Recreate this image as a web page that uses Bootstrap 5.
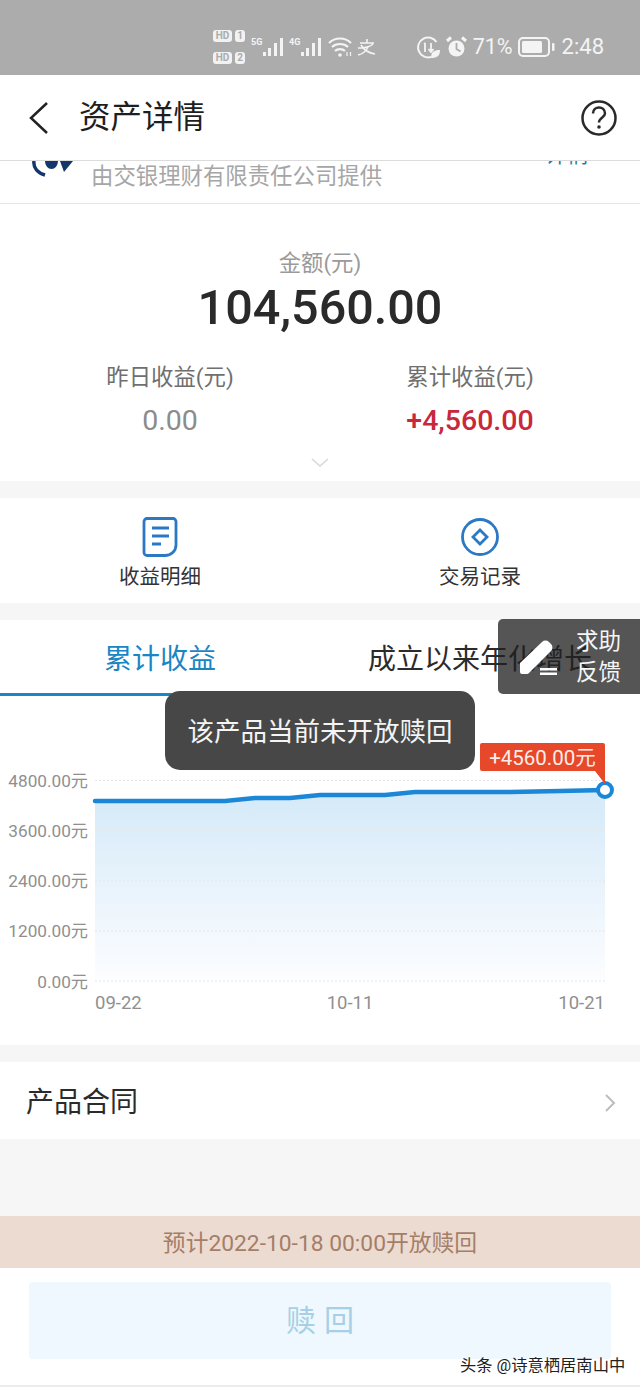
<!DOCTYPE html>
<html lang="zh-CN">
<head>
  <meta charset="UTF-8" />
  <meta name="viewport" content="width=device-width, initial-scale=1.0"/>
  <title>资产详情</title>
  <link href="https://cdn.jsdelivr.net/npm/bootstrap@5.3.3/dist/css/bootstrap.min.css" rel="stylesheet">
  <style>
    body {
      font-family: Roboto, "Noto Sans CJK SC", sans-serif;
      background: #f6f6f6;
      width: 640px;
      height: 1387px;
      overflow: hidden;
      position: relative;
    }
    .status-strip { height: 75px; background: #acacac; color: #f4f4f4; padding: 19px 36px 0 213px; }
    .hd-col { width: 32px; gap: 10px; }
    .hd-tag { font-size: 10px; line-height: 12px; height: 12px; font-weight: 700; background: #f2f2f2; color: #acacac; border-radius: 3px; text-align: center; width: 19px; }
    .hd-num { font-size: 10px; line-height: 12px; height: 12px; font-weight: 700; width: 10px; text-align: center; margin-left: 3px; background: #f2f2f2; color: #acacac; border-radius: 3px; }
    .net-label { font-size: 9px; line-height: 9px; font-weight: 700; width: 12px; margin-top: -10px; }
    .net-5g { margin-left: 6px; }
    .status-text { font-size: 22px; line-height: 26px; }
    .status-wifi { margin-left: 7px; }
    .status-zhi { margin-left: 4px; }
    .status-alarm { margin-left: 6px; }
    .status-pct { margin-left: 6px; font-size: 21.5px; }
    .status-batt { margin-left: 5px; }
    .status-time { margin-left: 7px; }
    .top-head { height: 86px; background: #fff; border-bottom: 1px solid #dcdcdc; padding: 0 22px 0 28px; }
    .top-title { font-size: 31.5px; color: #1e1e1e; margin-left: 29px; line-height: 40px; }
    .clip-strip { height: 43px; background: #fff; border-bottom: 1px solid #e6e6e6; overflow: hidden; position: relative; padding-left: 91px; }
    .issuer-text { font-size: 22.4px; line-height: 28px; color: #a6a6a6; padding-top: 1px; }
    .clip-link { color: #1a7fa8; font-size: 22px; line-height: 26px; position: absolute; top: -19px; left: 545px; }
    .clip-logo { position: absolute; left: 30px; top: 0; }
    .metric-box { height: 277px; background: #fff; padding-top: 44px; }
    .metric-cap { font-size: 22.4px; line-height: 30px; color: #9a9a9a; }
    .metric-total { font-size: 48.5px; line-height: 58px; font-weight: 500; color: #2a2a2a; margin-top: 1px; }
    .metric-pair { margin-top: 25px; }
    .metric-half { width: 320px; }
    .metric-half-l { padding-left: 20px; }
    .metric-half-r { padding-right: 20px; }
    .metric-cap-2 { font-size: 22.4px; line-height: 30px; color: #6f6f6f; }
    .metric-val { font-size: 28.5px; line-height: 36px; color: #8c8c8c; margin-top: 11px; }
    .metric-red { color: #c8283c; font-weight: 500; }
    .metric-chev { margin-top: 19px; }
    .sect-gap { height: 17px; }
    .action-row { height: 105px; background: #fff; }
    .action-cell { width: 320px; padding-top: 19px; }
    .action-cap { font-size: 20.5px; line-height: 26px; color: #333; margin-top: 7px; }
    .chart-panel { height: 425px; background: #fff; }
    .tab-row { height: 76px; }
    .tab-cell { width: 320px; font-size: 28px; line-height: 80px; text-align: center; color: #2b2b2b; height: 76px; }
    .tab-on { color: #1a86c4; border-bottom: 3px solid #1a86c4; }
    .chart-svg { display: block; }
    .chart-svg text { font-family: Roboto, "Noto Sans CJK SC", sans-serif; }
    .contract-row { height: 77px; background: #fff; padding: 5px 24px 0 26px; font-size: 28px; color: #2b2b2b; }
    .filler-gap { height: 77px; }
    .notice-row { height: 52px; background: #ecdbd0; color: #a57e68; font-size: 22.8px; padding-top: 5px; }
    .action-foot { height: 119px; background: #fff; border-bottom: 2px solid #ececec; padding: 14px 29px 0 29px; }
    .redeem-btn { height: 77px; width: 100%; background: #eff8fe; color: #a6d0e6; font-size: 30px; border: 0; border-radius: 4px; letter-spacing: 8px; padding-left: 14px; }
    .toast-msg { position: absolute; left: 165px; top: 691px; width: 310px; height: 79px; background: #474747; border-radius: 15px; color: #f4f4f4; font-size: 26.5px; padding-top: 3px; }
    .help-float { position: absolute; left: 498px; top: 619px; width: 142px; height: 75px; background: rgba(32,32,32,.76); border-radius: 5px 0 0 5px; color: #f5f5f5; font-size: 22.5px; line-height: 31px; padding-left: 21px; }
    .help-text { margin-right: 19px; }
    .wm-text { position: absolute; left: 460px; top: 1355px; font-size: 16.3px; line-height: 22px; color: #222; text-shadow: 0 0 2px #fff, 0 0 2px #fff; }
  </style>
</head>
<body>

<!-- status bar -->
<div class="status-strip d-flex align-items-center">
  <div class="hd-col d-flex flex-column">
    <div class="d-flex"><span class="hd-tag">HD</span><span class="hd-num">1</span></div>
    <div class="d-flex"><span class="hd-tag">HD</span><span class="hd-num">2</span></div>
  </div>
  <span class="net-label net-5g">5G</span>
  <svg width="20" height="20" viewBox="0 0 20 20" fill="#f4f4f4"><rect x="0" y="15" width="3" height="4"/><rect x="5" y="11" width="3" height="8"/><rect x="11" y="6" width="3" height="13"/><rect x="17" y="1" width="3" height="18"/></svg>
  <span class="net-label net-5g">4G</span>
  <svg width="20" height="20" viewBox="0 0 20 20" fill="#f4f4f4"><rect x="0" y="15" width="3" height="4"/><rect x="5" y="11" width="3" height="8"/><rect x="11" y="6" width="3" height="13"/><rect x="17" y="1" width="3" height="18"/></svg>
  <svg class="status-wifi" width="25" height="20" viewBox="0 0 25 20" fill="none" stroke="#f4f4f4" stroke-width="2.200"><path d="M1 6c6-6 16-6 22 0M4 10c4-4 12-4 16 0M7 14c2.500-2.500 7.500-2.500 10 0"/><circle cx="12" cy="18" r="1.800" fill="#f4f4f4" stroke="none"/><path d="M19 15v4M22.500 15v4" stroke-width="1.200"/></svg>
  <svg class="status-zhi" width="19" height="18" viewBox="0 0 19 18" fill="none" stroke="#f4f4f4" stroke-width="1.600"><path d="M3 5h14M10 1v4M1 10c7 0 12-1 15-4M4 7c3 5 8 8 14 9M1 17c5-1 8-4 10-8"/></svg>
  <svg class="ms-auto" width="23" height="23" viewBox="0 0 23 23" fill="none" stroke="#f4f4f4" stroke-width="2"><path d="M19.500 6A10 10 0 1 0 14 21"/><path d="M8 7v9M7 8l1.500-1M14 7v9M11.500 13l2.500 3 2.500-3" stroke-width="1.800"/><path d="M14 22c0-6 3-8 9-8 0 6-3 8-9 8z" fill="#f4f4f4" stroke="none"/></svg>
  <svg class="status-alarm" width="21" height="22" viewBox="0 0 21 22"><circle cx="10.500" cy="12.500" r="8" fill="#f4f4f4"/><path d="M10.500 7v6l4 2.500" stroke="#acacac" stroke-width="1.800" fill="none"/><path d="M1 5l4-3.500M20 5l-4-3.500" stroke="#f4f4f4" stroke-width="3"/></svg>
  <span class="status-text status-pct">71%</span>
  <svg class="status-batt" width="37" height="20" viewBox="0 0 37 20"><rect x="1" y="1" width="30" height="18" rx="4" fill="none" stroke="#f4f4f4" stroke-width="2"/><rect x="4" y="4" width="20" height="12" rx="1.500" fill="#f4f4f4"/><rect x="34" y="6" width="2.500" height="8" rx="1" fill="#f4f4f4"/></svg>
  <span class="status-text status-time">2:48</span>
</div>

<!-- header -->
<div class="top-head d-flex align-items-center">
  <svg width="22" height="34" viewBox="0 0 22 34" fill="none" stroke="#222" stroke-width="2.500"><path d="M19 2L3 17l16 15"/></svg>
  <span class="top-title">资产详情</span>
  <svg class="ms-auto" width="38" height="38" viewBox="0 0 38 38" fill="none" stroke="#2a2a2a" stroke-width="2.500"><circle cx="19" cy="19" r="16.500"/><path d="M13 14.500c0-8 12-8 12 0 0 4-6 4-6 9"/><circle cx="19" cy="28" r="1.800" fill="#2a2a2a" stroke="none"/></svg>
</div>

<!-- clipped issuer row -->
<div class="clip-strip">
  <svg class="clip-logo" width="46" height="18" viewBox="0 0 46 18"><path d="M4 0c-1 7 4 12 11 14" fill="none" stroke="#13366b" stroke-width="3.500"/><path d="M15 0h13a6.500 8 0 0 1-13 0z" fill="#13366b"/><path d="M30 0h13L34 11z" fill="#13366b"/></svg>
  <span class="clip-link">详情</span>
  <div class="issuer-text">由交银理财有限责任公司提供</div>
</div>

<!-- amounts -->
<div class="metric-box text-center">
  <div class="metric-cap">金额(元)</div>
  <div class="metric-total">104,560.00</div>
  <div class="metric-pair d-flex">
    <div class="metric-half metric-half-l">
      <div class="metric-cap-2">昨日收益(元)</div>
      <div class="metric-val">0.00</div>
    </div>
    <div class="metric-half metric-half-r">
      <div class="metric-cap-2">累计收益(元)</div>
      <div class="metric-val metric-red">+4,560.00</div>
    </div>
  </div>
  <svg class="metric-chev d-block mx-auto" width="18" height="10" viewBox="0 0 18 10" fill="none" stroke="#d8d8d8" stroke-width="1.500"><path d="M1 1l8 7 8-7"/></svg>
</div>
<div class="sect-gap"></div>

<!-- shortcuts -->
<div class="action-row d-flex text-center">
  <div class="action-cell">
    <svg class="d-block mx-auto" width="36" height="40" viewBox="0 0 36 40" fill="none" stroke="#2b78c4" stroke-width="2.800"><path d="M5 1.500h26a3 3 0 0 1 3 3V28c0 6-5 10.500-11 10.500H5a3 3 0 0 1-3-3v-31a3 3 0 0 1 3-3z"/><path d="M10 11h17M10 19h17M10 27h9"/></svg>
    <div class="action-cap">收益明细</div>
  </div>
  <div class="action-cell">
    <svg class="d-block mx-auto" width="40" height="40" viewBox="0 0 40 40" fill="none" stroke="#2b78c4" stroke-width="2.800"><circle cx="20" cy="20" r="17.500"/><path d="M20 13l7 7-7 7-7-7z"/></svg>
    <div class="action-cap">交易记录</div>
  </div>
</div>
<div class="sect-gap"></div>

<!-- chart -->
<div class="chart-panel">
  <div class="tab-row d-flex">
    <div class="tab-cell tab-on">累计收益</div>
    <div class="tab-cell">成立以来年化增长</div>
  </div>
  <svg class="chart-svg" width="640" height="349" viewBox="0 0 640 349">
    <defs>
      <linearGradient id="areaFade" x1="0" y1="0" x2="0" y2="1">
        <stop offset="0" stop-color="#d4e9f8"/>
        <stop offset="1" stop-color="#fcfdff"/>
      </linearGradient>
    </defs>
    <path d="M95 105L225 105L255 102L290 102L320 99L385 99L415 96L510 96L560 95L605 94V285H95Z" fill="url(#areaFade)"/>
    <g stroke="#e6e6e6" stroke-width="1" stroke-dasharray="2 2">
      <line x1="95" x2="605" y1="84.500" y2="84.500"/>
      <line x1="95" x2="605" y1="134.500" y2="134.500"/>
      <line x1="95" x2="605" y1="185" y2="185"/>
      <line x1="95" x2="605" y1="235" y2="235"/>
      <line x1="95" x2="605" y1="285" y2="285"/>
    </g>
    <g font-size="17.2" fill="#8f8f8f" text-anchor="end">
      <text x="88" y="91">4800.00元</text>
      <text x="88" y="141">3600.00元</text>
      <text x="88" y="191">2400.00元</text>
      <text x="88" y="241">1200.00元</text>
      <text x="88" y="292">0.00元</text>
    </g>
    <g font-size="18.500" fill="#8f8f8f">
      <text x="95" y="313">09-22</text>
      <text x="350" y="313" text-anchor="middle">10-11</text>
      <text x="605" y="313" text-anchor="end">10-21</text>
    </g>
    <path d="M95 105L225 105L255 102L290 102L320 99L385 99L415 96L510 96L560 95L605 94" fill="none" stroke="#1b87d6" stroke-width="4.500" stroke-linecap="round"/>
    <circle cx="605" cy="94" r="7" fill="#fff" stroke="#1b87d6" stroke-width="4"/>
    <path d="M480 49a2 2 0 0 1 2-2h121a2 2 0 0 1 2 2v39l-10-13h-113a2 2 0 0 1-2-2z" fill="#e8482a"/>
    <text x="542.500" y="69" font-size="20.500" fill="#fbeee8" text-anchor="middle">+4560.00元</text>
  </svg>
</div>
<div class="sect-gap"></div>

<div class="contract-row d-flex align-items-center justify-content-between">
  <span>产品合同</span>
  <svg width="12" height="20" viewBox="0 0 12 20" fill="none" stroke="#bdbdbd" stroke-width="2"><path d="M2 2l8 8-8 8"/></svg>
</div>
<div class="filler-gap"></div>

<div class="notice-row d-flex align-items-center justify-content-center">预计2022-10-18 00:00开放赎回</div>
<div class="action-foot">
  <button class="redeem-btn" type="button" disabled>赎回</button>
</div>

<!-- overlays -->
<div class="toast-msg d-flex align-items-center justify-content-center">该产品当前未开放赎回</div>
<div class="help-float d-flex align-items-center">
  <svg width="38" height="36" viewBox="0 0 38 36"><path d="M1 24L23 3a5 5 0 0 1 7 0l2 2a5 5 0 0 1 0 7L10 34a3 3 0 0 1-2 1H3a2 2 0 0 1-2-2z" fill="#fff"/><rect x="21" y="29" width="17" height="2.500" fill="#fff"/><rect x="21" y="33.500" width="17" height="2.500" fill="#fff"/></svg>
  <div class="help-text ms-auto text-center">求助<br>反馈</div>
</div>
<div class="wm-text">头条 @诗意栖居南山中</div>

<script src="https://cdn.jsdelivr.net/npm/bootstrap@5.3.3/dist/js/bootstrap.bundle.min.js"></script>
</body>
</html>
